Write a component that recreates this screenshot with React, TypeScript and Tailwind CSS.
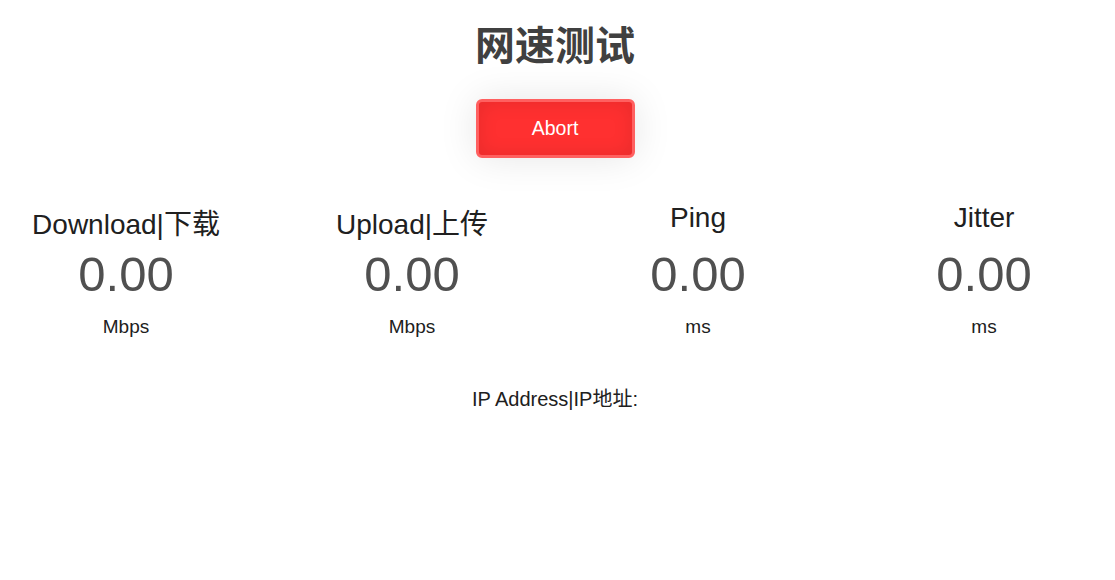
import React from "react";

const groups = [
  { name: "Download|下载", value: "0.00", unit: "Mbps", cjk: true },
  { name: "Upload|上传", value: "0.00", unit: "Mbps", cjk: true },
  { name: "Ping", value: "0.00", unit: "ms", cjk: false },
  { name: "Jitter", value: "0.00", unit: "ms", cjk: false },
];

export default function App() {
  return (
    <div
      className="min-h-screen w-full bg-white text-center text-[19px] text-[#202020] pr-[5px]"
      style={{ fontFamily: '"Liberation Sans", "Noto Sans CJK SC", sans-serif' }}
    >
      <h1 className="pt-[24px] text-[40px] font-bold leading-[45px] text-[#404040]">网速测试</h1>
      <div className="mt-[30px] flex justify-center">
        <button className="w-[159px] h-[59px] rounded-[6px] border-[3px] border-[#ff6060] bg-[#ff3030] text-white text-[19.5px] shadow-[0_0_38px_rgba(0,0,0,0.1),inset_0_0_19px_rgba(0,0,0,0.1)]">
          Abort
        </button>
      </div>
      <div className="mt-[43px] flex justify-center gap-[46px]">
        {groups.map((g) => (
          <div key={g.name} className="w-[240px] flex flex-col items-center">
            <div className={`h-[45px] text-[28px] leading-[24px] whitespace-nowrap ${g.cjk ? "pt-[12px]" : "pt-[5px]"}`}>{g.name}</div>
            <div className="text-[49px] leading-[56px] text-[#505050]">{g.value}</div>
            <div className="mt-[14px] leading-[22px]">{g.unit}</div>
          </div>
        ))}
      </div>
      <div className="mt-[50px] text-[20px] leading-[23px]">IP Address|IP地址:</div>
    </div>
  );
}
